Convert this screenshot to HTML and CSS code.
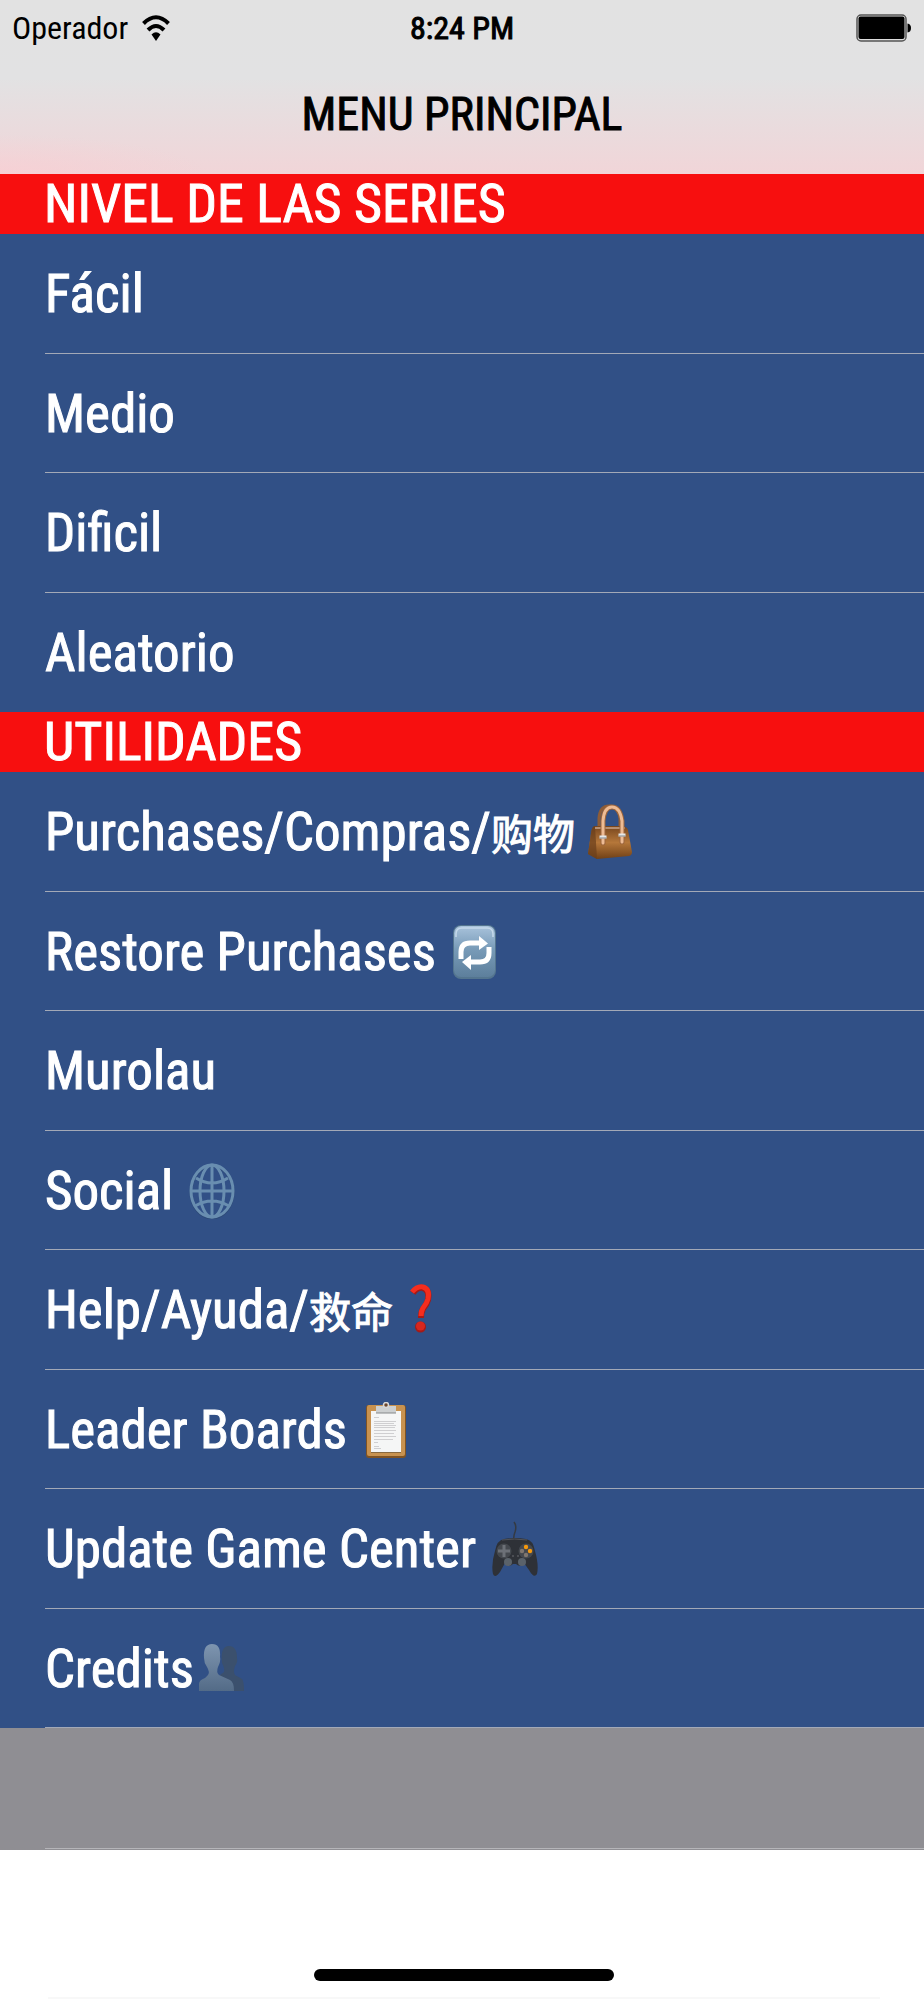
FILE: index.html
```html
<!DOCTYPE html>
<html lang="es">
<head>
    <meta charset="UTF-8">
    <meta name="viewport" content="width=device-width, initial-scale=1.0">
    <title>Menu Principal</title>
    <link rel="stylesheet" href="styles.css">
</head>
<body>

    <header class="top-bar">
        <div class="status">
            <div class="carrier">
                <span>Operador</span>
                <svg class="wifi" viewBox="0 0 28 26" aria-hidden="true">
                    <path d="M1.500 8.500Q14-4 26.500 8.500" fill="none" stroke="#000" stroke-width="4"/>
                    <path d="M6 15Q14 7 22 15" fill="none" stroke="#000" stroke-width="4"/>
                    <path d="M9.500 19.500Q14 15 18.500 19.500L14 26Z"/>
                </svg>
            </div>
            <span class="clock">8:24 PM</span>
            <svg class="battery" viewBox="0 0 56 28" aria-hidden="true">
                <rect x="1" y="1" width="49" height="26" rx="4" fill="#ddd" stroke="#555" stroke-width="1.500"/>
                <rect x="2.500" y="2.500" width="46" height="22.500" rx="2"/>
                <path d="M51.500 9.500Q55 10 55 14T51.500 18.500Z"/>
            </svg>
        </div>
        <h1>MENU PRINCIPAL</h1>
    </header>

    <main>
        <!-- Series levels -->
        <section>
            <h2>NIVEL DE LAS SERIES</h2>
            <ul class="menu levels">
                <li><a href="#facil">Fácil</a></li>
                <li><a href="#medio">Medio</a></li>
                <li><a href="#dificil">Dificil</a></li>
                <li><a href="#aleatorio">Aleatorio</a></li>
            </ul>
        </section>

        <!-- Utilities -->
        <section>
            <h2>UTILIDADES</h2>
            <ul class="menu utilities">
                <li><a href="#compras" class="snug"><span>Purchases/Compras/<span class="cjk" lang="zh">购物</span></span>
                    <svg class="icon" viewBox="0 0 46 56" aria-hidden="true">
                        <defs>
                            <linearGradient id="bag" x1="0" y1="0" x2="0" y2="1">
                                <stop offset="0" stop-color="#76451d"/>
                                <stop offset="0.5" stop-color="#b5773a"/>
                                <stop offset="1" stop-color="#704016"/>
                            </linearGradient>
                        </defs>
                        <path d="M12 24V14Q13 2 22 2T33 14V24" fill="none" stroke="#8d5c37" stroke-width="3"/>
                        <path d="M8 22H33Q40 22 41 26L45 48Q45 51 42 52L10 55L1 50L4 29Q5 22 8 22Z" fill="url(#bag)"/>
                        <path d="M8 22L10 55L1 50L4 29Q5 22 8 22Z" fill="#6a3e1b" opacity=".7"/>
                        <path d="M8 24H38" stroke="#c9a68c" stroke-width="1.500"/>
                        <path d="M16 39V17Q17 3 25 3T35 17V38" fill="none" stroke="#9b643c" stroke-width="5" stroke-linecap="round"/>
                        <path d="M16 39V17Q17 3 25 3T35 17V38" fill="none" stroke="#edbb94" stroke-width="3" stroke-linecap="round"/>
                        <path d="M12.500 33h7M31.500 31h7" stroke="#e5e8e9" stroke-width="3"/>
                        <path d="M12.500 34h7M31.500 32h7" stroke="#85888b"/>
                    </svg>
                </a></li>
                <li><a href="#restore"><span>Restore Purchases</span>
                    <svg class="icon" viewBox="0 0 46 56" aria-hidden="true">
                        <defs>
                            <linearGradient id="tile" x1="0" y1="0" x2="0" y2="1">
                                <stop offset="0" stop-color="#a9c3dc"/>
                                <stop offset="0.45" stop-color="#789bb8"/>
                                <stop offset="1" stop-color="#5d7f9c"/>
                            </linearGradient>
                        </defs>
                        <rect x="1" y="1" width="43" height="54" rx="8" fill="#54758f"/>
                        <rect x="2" y="2" width="41" height="51" rx="7" fill="url(#tile)"/>
                        <path d="M4 13V10Q4 4 10 4H35Q41 4 41 10V13" fill="none" stroke="#c5d9ea" stroke-width="1.500"/>
                        <path d="M9 35V28Q9 19 18 19H28" fill="none" stroke="#fff" stroke-width="5"/>
                        <path d="M27 12L36 19.500L27 26Z" fill="#fff"/>
                        <path d="M37 23V29Q37 38 28 38H18" fill="none" stroke="#fff" stroke-width="5"/>
                        <path d="M19 31L10 38L19 46Z" fill="#fff"/>
                    </svg>
                </a></li>
                <li><a href="#murolau">Murolau</a></li>
                <li><a href="#social"><span>Social</span>
                    <svg class="icon" viewBox="0 0 46 56" aria-hidden="true">
                        <g fill="none" stroke="#294469" stroke-width="3" opacity=".5">
                            <ellipse cx="23" cy="29" rx="21" ry="26"/>
                        </g>
                        <g fill="none" stroke="#698eb0" stroke-width="3">
                            <ellipse cx="23" cy="28" rx="21" ry="26"/>
                            <ellipse cx="23" cy="28" rx="12" ry="26"/>
                            <path d="M23 2V54M2 28H44M7 15Q23 25 39 15M6 43Q23 33 40 43"/>
                        </g>
                    </svg>
                </a></li>
                <li><a href="#ayuda" class="snug"><span>Help/Ayuda/<span class="cjk" lang="zh">救命</span></span>
                    <svg class="icon question" viewBox="0 0 32 56" aria-hidden="true">
                        <path d="M8 11Q12 5 18 6Q25 8 23 18Q22 22 18 27Q16 30 16 36" fill="none" stroke="#a71915" stroke-width="6"/>
                        <path d="M7 10Q12 4 18 5Q25 7 23 17Q22 21 18 26Q16 29 16 34" fill="none" stroke="#f52d1d" stroke-width="5"/>
                        <circle cx="15.500" cy="45" r="5.500" fill="#a51a17"/>
                        <circle cx="15.500" cy="44" r="4.500" fill="#d7271e"/>
                    </svg>
                </a></li>
                <li><a href="#leaders"><span>Leader Boards</span>
                    <svg class="icon" viewBox="0 0 46 56" aria-hidden="true">
                        <rect x="3" y="3" width="40" height="53" rx="3" fill="#805322"/>
                        <rect x="4" y="3" width="38" height="51" rx="2" fill="#c8924f"/>
                        <rect x="8" y="10" width="30" height="41" fill="#88693f"/>
                        <rect x="8" y="9" width="30" height="41" fill="#f5f6f6"/>
                        <path d="M13 4H33V11H13Z" fill="#cdd0d1"/>
                        <path d="M13 11H33" stroke="#858889"/>
                        <circle cx="23" cy="3" r="2.500" fill="#6c472d" stroke="#d8d8d8" stroke-width="1.500"/>
                        <path d="M11 15.500h5M11 19.500h22M11 21.500h20M11 23.500h22M11 25.500h21M11 28.500h22M11 31.500h20M11 34.500h22M11 37.500h19M11 40.500h4M11 44.500h5M11 46.500h7" stroke="#cfcfd1"/>
                    </svg>
                </a></li>
                <li><a href="#gamecenter"><span>Update Game Center</span>
                    <svg class="icon" viewBox="0 0 46 56" aria-hidden="true">
                        <path d="M22 21Q21 16 23 11Q25 5 22 1" fill="none" stroke="#343a43" stroke-width="1.500"/>
                        <path d="M12 18Q23 16 34 18Q41 19 43 30Q47 44 45 53Q42 58 37 49L32 42Q28 47 24 43H21Q17 47 13 42L8 51Q3 58 1 53Q-1 43 3 30Q5 19 12 18Z" fill="#2e3137"/>
                        <path d="M10 19Q23 17 35 19" fill="none" stroke="#515359"/>
                        <circle cx="12" cy="30" r="7.500" fill="#44484e"/>
                        <circle cx="34" cy="30" r="7.500" fill="#44484e"/>
                        <path d="M12 24V36M6 30H18" stroke="#6c7077" stroke-width="3"/>
                        <circle cx="16" cy="41" r="4" fill="#5a626a"/>
                        <circle cx="30" cy="41" r="4" fill="#5a626a"/>
                        <circle cx="34" cy="26" r="2.200" fill="#f6990d"/>
                        <circle cx="38" cy="30" r="2.200" fill="#f6990d"/>
                        <circle cx="30" cy="30" r="2.200" fill="#81776f"/>
                        <circle cx="34" cy="34" r="2.200" fill="#81776f"/>
                        <path d="M20 35h2M25 35h2" stroke="#686b70"/>
                    </svg>
                </a></li>
                <li><a href="#credits" class="tight"><span>Credits</span>
                    <svg class="icon" viewBox="0 0 46 56" aria-hidden="true">
                        <defs>
                            <linearGradient id="person" x1="0" y1="0" x2="0" y2="1">
                                <stop offset="0" stop-color="#7e95b0"/>
                                <stop offset="1" stop-color="#536b87"/>
                            </linearGradient>
                        </defs>
                        <path d="M31 5Q39 5 39 17Q40 21 37 25Q35 31 37 34L44 38Q46 40 46 50H22V34L26 31Q27 28 24 22Q22 5 31 5Z" fill="#3b506d"/>
                        <path d="M14 3Q23 3 22 16Q23 20 20 26Q18 31 21 34L32 39Q36 41 36 50H1V43Q1 39 7 37L10 34Q12 31 9 26Q6 22 6 17Q5 3 14 3Z" fill="url(#person)"/>
                    </svg>
                </a></li>
            </ul>
        </section>
        <div class="empty-row"></div>
    </main>

    <footer>
        <div class="home-indicator"></div>
    </footer>

</body>
</html>
```
FILE: styles.css
```css
/* Base styling */
* {
    box-sizing: border-box;
}

body {
    margin: 0;
    min-height: 100vh;
    display: flex;
    flex-direction: column;
    font-family: "Liberation Sans Narrow", "Arial Narrow", "Roboto Condensed", "Liberation Sans", sans-serif;
    background-color: #fff;
    color: #000;
}

h1, h2 {
    margin: 0;
    font-weight: normal;
}

/* Status bar and title */
.top-bar {
    height: 174px;
    background: radial-gradient(ellipse at 0 100%, rgba(250, 205, 210, 0.6), rgba(250, 205, 210, 0) 16%),
        linear-gradient(#e2e2e2, #e2e2e3 45%, #f1d5d8);
}

.status {
    display: grid;
    grid-template-columns: 1fr auto 1fr;
    align-items: center;
    height: 56px;
    padding: 0 12px;
    font-size: 32px;
}

.carrier {
    display: flex;
    align-items: center;
    gap: 14px;
}

.clock {
    -webkit-text-stroke: 1px #000;
}

.wifi {
    width: 28px;
    height: 26px;
}

.battery {
    width: 56px;
    height: 28px;
    justify-self: end;
}

h1 {
    font-size: 46px;
    line-height: 116px;
    text-align: center;
    -webkit-text-stroke: 1px #000;
}

/* Section headings */
h2 {
    padding: 0 44px;
    font-size: 54px;
    line-height: 60px;
    color: #fff;
    background-color: #f70f0f;
    -webkit-text-stroke: 1px #fff;
}

/* Menu rows */
.menu {
    display: grid;
    grid-auto-rows: 1fr;
    margin: 0;
    padding: 0 0 0 45px;
    list-style: none;
    background-color: #315086;
}

.levels {
    min-height: 478px;
}

.utilities {
    min-height: 956px;
}

.menu li {
    border-bottom: 1px solid #a3a9b7;
}

.levels li:last-child {
    border-bottom: none;
}

.menu a {
    display: flex;
    align-items: center;
    gap: 16px;
    height: 100%;
    padding-top: 2px;
    font-size: 53px;
    line-height: 60px;
    color: #fff;
    text-decoration: none;
    -webkit-text-stroke: 1px #fff;
}

.menu a.snug {
    gap: 12px;
}

.menu a.tight {
    gap: 4px;
}

.cjk {
    font-family: "Noto Sans CJK SC", sans-serif;
    font-size: 42px;
}

.icon {
    width: 46px;
    height: 56px;
    -webkit-text-stroke: 0;
}

.question {
    width: 32px;
}

.empty-row {
    height: 122px;
    padding: 0 0 2px 45px;
    background-color: #8f8e93;
}

.empty-row::after {
    content: "";
    display: block;
    height: 100%;
    border-bottom: 1px solid #b5b5b9;
}

/* Bottom area */
footer {
    flex: 1;
    display: flex;
    flex-direction: column;
    justify-content: flex-end;
    align-items: center;
    padding: 0 44px 1px 48px;
}

.home-indicator {
    width: 36%;
    height: 12px;
    border-radius: 6px;
    background-color: #000;
}

footer::after {
    content: "";
    width: 100%;
    height: 2px;
    margin-top: 16px;
    background-color: #f8f8f8;
}
```
